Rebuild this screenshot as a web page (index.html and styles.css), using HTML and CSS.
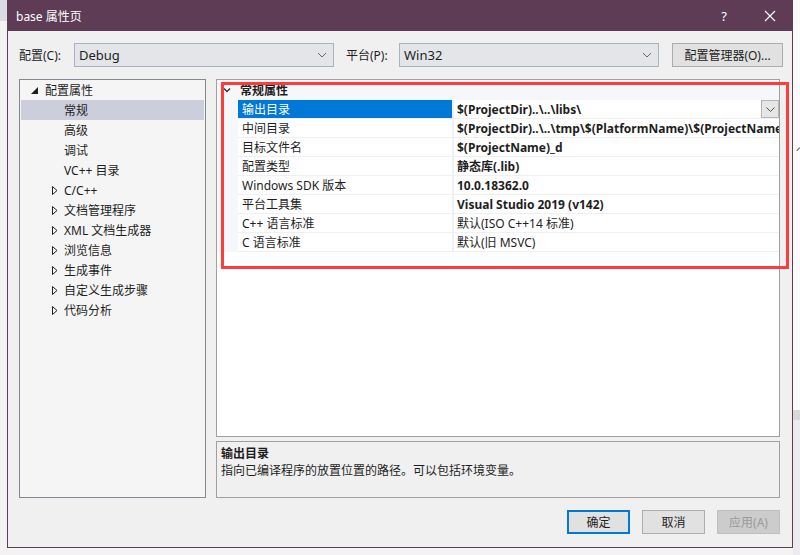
FILE: index.html
```html
<!DOCTYPE html>
<html>

<head>
    <title>base 属性页</title>
    <link rel="stylesheet" href="styles.css">
</head>

<body>
    <div class="desk">
        <div class="desk-left"></div>
        <div class="window">
            <div class="titlebar">
                <span class="title">base 属性页</span>
                <span class="title-btn help">?</span>
                <span class="title-btn close">
                    <svg width="12" height="12" viewBox="0 0 12 12"><path d="M1 1 L11 11 M11 1 L1 11" stroke="#fff" stroke-width="1.2" fill="none"/></svg>
                </span>
            </div>

            <div class="content">
                <div class="toolbar">
                    <label class="tb-label">配置(C):</label>
                    <div class="combo">
                        <span>Debug</span>
                        <svg class="chev" width="10" height="6" viewBox="0 0 10 6"><path d="M1 1 L5 5 L9 1" stroke="#666" fill="none"/></svg>
                    </div>
                    <label class="tb-label platform">平台(P):</label>
                    <div class="combo">
                        <span>Win32</span>
                        <svg class="chev" width="10" height="6" viewBox="0 0 10 6"><path d="M1 1 L5 5 L9 1" stroke="#666" fill="none"/></svg>
                    </div>
                    <button class="btn manager">配置管理器(O)...</button>
                </div>

                <div class="main">
                    <ul class="tree">
                        <li class="tree-item root">
                            <svg class="tri" width="7" height="7" viewBox="0 0 7 7"><path d="M7 0 L7 7 L0 7 Z" fill="#1e1e1e"/></svg>
                            配置属性
                        </li>
                        <li class="tree-item leaf selected">常规</li>
                        <li class="tree-item leaf">高级</li>
                        <li class="tree-item leaf">调试</li>
                        <li class="tree-item leaf">VC++ 目录</li>
                        <li class="tree-item node"><svg class="tri" width="6" height="9" viewBox="0 0 6 9"><path d="M0.5 0.5 L5 4.5 L0.5 8.5 Z" stroke="#1e1e1e" fill="none"/></svg>C/C++</li>
                        <li class="tree-item node"><svg class="tri" width="6" height="9" viewBox="0 0 6 9"><path d="M0.5 0.5 L5 4.5 L0.5 8.5 Z" stroke="#1e1e1e" fill="none"/></svg>文档管理程序</li>
                        <li class="tree-item node"><svg class="tri" width="6" height="9" viewBox="0 0 6 9"><path d="M0.5 0.5 L5 4.5 L0.5 8.5 Z" stroke="#1e1e1e" fill="none"/></svg>XML 文档生成器</li>
                        <li class="tree-item node"><svg class="tri" width="6" height="9" viewBox="0 0 6 9"><path d="M0.5 0.5 L5 4.5 L0.5 8.5 Z" stroke="#1e1e1e" fill="none"/></svg>浏览信息</li>
                        <li class="tree-item node"><svg class="tri" width="6" height="9" viewBox="0 0 6 9"><path d="M0.5 0.5 L5 4.5 L0.5 8.5 Z" stroke="#1e1e1e" fill="none"/></svg>生成事件</li>
                        <li class="tree-item node"><svg class="tri" width="6" height="9" viewBox="0 0 6 9"><path d="M0.5 0.5 L5 4.5 L0.5 8.5 Z" stroke="#1e1e1e" fill="none"/></svg>自定义生成步骤</li>
                        <li class="tree-item node"><svg class="tri" width="6" height="9" viewBox="0 0 6 9"><path d="M0.5 0.5 L5 4.5 L0.5 8.5 Z" stroke="#1e1e1e" fill="none"/></svg>代码分析</li>
                    </ul>

                    <div class="right">
                        <div class="grid">
                            <div class="cat-row">
                                <svg class="cat-chev" width="8" height="6" viewBox="0 0 8 6"><path d="M1 1.5 L4 4.5 L7 1.5" stroke="#333" stroke-width="1.4" fill="none"/></svg>
                                <span>常规属性</span>
                            </div>
                            <div class="prop selected">
                                <div class="gutter"></div>
                                <div class="pname">输出目录</div>
                                <div class="pval bold">$(ProjectDir)..\..\libs\
                                    <span class="drop"><svg width="9" height="5" viewBox="0 0 9 5"><path d="M0.5 0.5 L4.5 4.5 L8.5 0.5" stroke="#555" fill="none"/></svg></span>
                                </div>
                            </div>
                            <div class="prop">
                                <div class="gutter"></div>
                                <div class="pname">中间目录</div>
                                <div class="pval bold">$(ProjectDir)..\..\tmp\$(PlatformName)\$(ProjectName)\$(Configuration)\</div>
                            </div>
                            <div class="prop">
                                <div class="gutter"></div>
                                <div class="pname">目标文件名</div>
                                <div class="pval bold">$(ProjectName)_d</div>
                            </div>
                            <div class="prop">
                                <div class="gutter"></div>
                                <div class="pname">配置类型</div>
                                <div class="pval bold">静态库(.lib)</div>
                            </div>
                            <div class="prop">
                                <div class="gutter"></div>
                                <div class="pname">Windows SDK 版本</div>
                                <div class="pval bold">10.0.18362.0</div>
                            </div>
                            <div class="prop">
                                <div class="gutter"></div>
                                <div class="pname">平台工具集</div>
                                <div class="pval bold">Visual Studio 2019 (v142)</div>
                            </div>
                            <div class="prop">
                                <div class="gutter"></div>
                                <div class="pname">C++ 语言标准</div>
                                <div class="pval">默认(ISO C++14 标准)</div>
                            </div>
                            <div class="prop">
                                <div class="gutter"></div>
                                <div class="pname">C 语言标准</div>
                                <div class="pval">默认(旧 MSVC)</div>
                            </div>
                        </div>
                        <div class="desc">
                            <div class="desc-title">输出目录</div>
                            <div class="desc-text">指向已编译程序的放置位置的路径。可以包括环境变量。</div>
                        </div>
                    </div>
                </div>

                <div class="actions">
                    <button class="btn default">确定</button>
                    <button class="btn">取消</button>
                    <button class="btn disabled">应用(A)</button>
                </div>
            </div>

            <!-- annotation box drawn over the screenshot -->
            <div class="highlight"></div>
        </div>
        <div class="desk-right">
            <span class="desk-mark">ᐟ</span>
        </div>
    </div>
</body>

</html>
```

FILE: styles.css
```css
body {
    margin: 0;
    font-family: "Noto Sans", "Noto Sans CJK SC", sans-serif;
    font-size: 12px;
    color: #1e1e1e;
    background-color: #f3f3f3;
}

.desk {
    display: flex;
    width: 800px;
    height: 555px;
    overflow: hidden;
    position: relative;
}

.desk-left {
    flex: none;
    width: 7px;
    height: 555px;
    background: linear-gradient(#dadbe3 0, #dadbe3 21px, #f3f3f3 21px);
}

.desk-right {
    flex: 1;
    position: relative;
    background: linear-gradient(#fbfbfb 0, #fbfbfb 410px, #d8d8d8 410px, #d8d8d8 420px, #ececf0 420px);
}

.desk-mark {
    position: absolute;
    left: 3px;
    top: 143px;
    font-size: 11px;
}

.window {
    flex: none;
    position: relative;
    width: 784px;
    height: 547px;
    border: 1px solid #5e3c55;
    border-top: none;
    background-color: #f0f0f0;
}

.titlebar {
    height: 31px;
    background-color: #5e3c55;
    color: #fff;
    display: flex;
    align-items: center;
    padding-left: 9px;
    margin: 0 -1px;
}

.title {
    flex: 1;
    font-size: 12px;
}

.title-btn {
    width: 46px;
    text-align: center;
    font-size: 13px;
}

.close {
    padding-top: 3px;
}

.content {
    padding: 12px 12px 0 11px;
}

.toolbar {
    display: flex;
    align-items: center;
    height: 24px;
}

.tb-label {
    flex: none;
    width: 55px;
}

.tb-label.platform {
    width: 53px;
    margin-left: 12px;
}

.combo {
    flex: none;
    border: 1px solid #a9b3bf;
    background-color: #e3e5e8;
    display: flex;
    align-items: center;
    justify-content: space-between;
    padding: 0 6px 0 4px;
    box-sizing: border-box;
    width: 260px;
    height: 24px;
    font-size: 13px;
}

.btn {
    font-family: inherit;
    font-size: 12px;
    color: #1e1e1e;
    background-color: #e1e1e1;
    border: 1px solid #adadad;
    height: 24px;
    padding: 0;
    cursor: pointer;
}

.manager {
    flex: none;
    margin-left: 13px;
    width: 111px;
}

.main {
    display: flex;
    gap: 10px;
    margin-top: 12px;
    height: 419px;
}

.tree {
    flex: none;
    list-style: none;
    margin: 0;
    padding: 0;
    width: 185px;
    background-color: #f5f5f5;
    border: 1px solid #828790;
}

.tree-item {
    height: 20px;
    line-height: 21px;
    margin: 0 1px;
    position: relative;
    white-space: nowrap;
}

.tree-item .tri {
    position: absolute;
}

.root {
    padding-left: 24px;
}

.root .tri {
    left: 10px;
    top: 7px;
}

.leaf {
    padding-left: 43px;
}

.node {
    padding-left: 43px;
}

.node .tri {
    left: 31px;
    top: 6px;
}

.tree-item.selected {
    background-color: #cccedb;
}

.right {
    flex: 1;
    min-width: 0;
    display: flex;
    flex-direction: column;
    gap: 4px;
}

.grid {
    height: 356px;
    background-color: #fff;
    border: 1px solid #a0a0a0;
    overflow: hidden;
}

.cat-row {
    height: 20px;
    line-height: 21px;
    display: flex;
    align-items: center;
    background-color: #f5f7fa;
    font-weight: bold;
}

.cat-chev {
    margin: 0 9px 0 6px;
}

.prop {
    display: flex;
    height: 19px;
    line-height: 20px;
}

.gutter {
    flex: none;
    width: 21px;
    background-color: #f5f7fa;
}

.pname {
    flex: none;
    width: 210px;
    padding-left: 4px;
    border-bottom: 1px solid #eef0f4;
    border-right: 2px solid #eef0f4;
    white-space: nowrap;
}

.pval {
    flex: 1;
    min-width: 0;
    padding-left: 3px;
    white-space: nowrap;
    overflow: hidden;
    border-bottom: 1px solid #eef0f4;
    position: relative;
}

.bold {
    font-weight: bold;
}

.prop.selected .pname {
    background-color: #0078d7;
    color: #fff;
}

.drop {
    position: absolute;
    right: 0;
    top: 0;
    width: 16px;
    height: 16px;
    border: 1px solid #b5b5b5;
    background-color: #e6e6e6;
    display: flex;
    align-items: center;
    justify-content: center;
}

.desc {
    flex: 1;
    border: 1px solid #a0a0a0;
    padding: 3px 4px;
    line-height: 17px;
}

.desc-title {
    font-weight: bold;
}

.actions {
    display: flex;
    justify-content: flex-end;
    gap: 12px;
    margin-top: 12px;
}

.actions .btn {
    width: 63px;
}

.btn.default {
    border: 2px solid #0078d7;
}

.btn.disabled {
    background-color: #cccccc;
    border-color: #bfbfbf;
    color: #9a9a9a;
}

.highlight {
    position: absolute;
    left: 213px;
    top: 82px;
    width: 562px;
    height: 181px;
    border: 3px solid #ff3c3c;
    pointer-events: none;
}
```
